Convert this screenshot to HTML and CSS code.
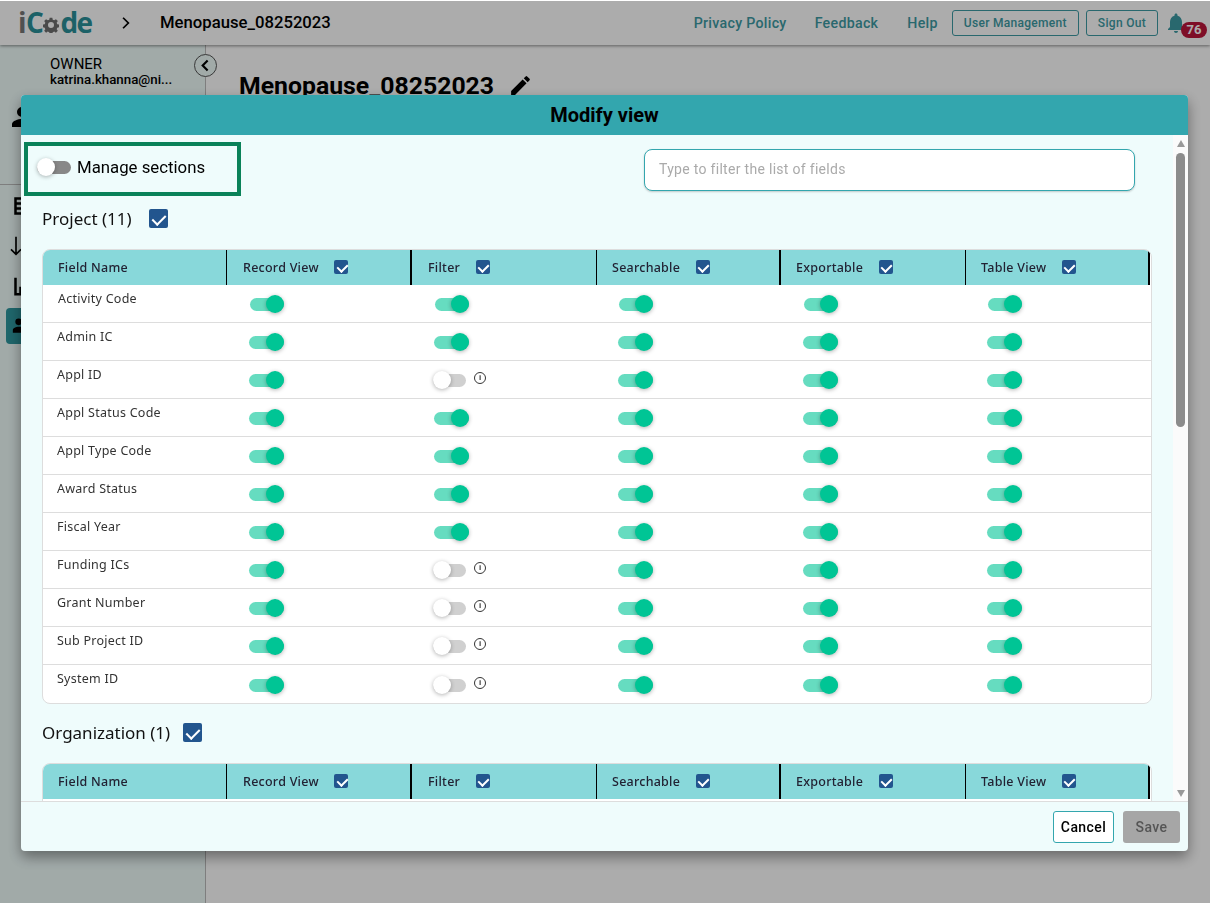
FILE: index.html
```html
<!DOCTYPE html>
<html lang="en">

<head>
    <meta charset="UTF-8">
    <meta name="viewport" content="width=device-width, initial-scale=1.0">
    <title>Modify view</title>
    <link rel="stylesheet" href="styles.css">
</head>

<body>
    <header class="topbar">
        <div class="logo">
            <span class="logo-i">i</span><span>C</span><svg class="logo-gear" viewBox="0 0 24 24"><path fill="#6e6e6e" fill-rule="evenodd" d="M10 1h4l.6 3 2.2.9 2.6-1.700 2.800 2.800-1.700 2.600.9 2.200 3 .6v4l-3 .6-.9 2.200 1.700 2.600-2.800 2.800-2.600-1.700-2.200.9-.6 3h-4l-.6-3-2.200-.9-2.600 1.700-2.800-2.800 1.700-2.600-.9-2.200-3-.6v-4l3-.6.9-2.200-1.700-2.600 2.800-2.800 2.600 1.700 2.200-.9zM12 7.500a4.500 4.500 0 1 0 0 9 4.500 4.500 0 0 0 0-9z"/></svg><span>de</span>
        </div>
        <svg class="crumb-arrow" viewBox="0 0 24 24"><path d="M7 3l9 9-9 9" fill="none" stroke="#000" stroke-width="3"/></svg>
        <div class="crumb">Menopause_08252023</div>
        <nav class="topnav">
            <a href="#">Privacy Policy</a>
            <a href="#">Feedback</a>
            <a href="#">Help</a>
            <button class="outline-btn">User Management</button>
            <button class="outline-btn">Sign Out</button>
        </nav>
        <div class="bell">
            <svg viewBox="0 0 24 24"><path fill="#3d9aa3" d="M12 22c1.100 0 2-.9 2-2h-4c0 1.100.9 2 2 2zm6-6v-5c0-3.070-1.630-5.640-4.500-6.320V4c0-.83-.67-1.500-1.500-1.500s-1.500.67-1.500 1.500v.68C7.640 5.360 6 7.920 6 11v5l-2 2v1h16v-1l-2-2z"/></svg>
            <span class="bell-count">76</span>
        </div>
    </header>

    <div class="page">
        <aside class="sidebar">
            <div class="owner">
                <div class="owner-role">OWNER</div>
                <div class="owner-mail">katrina.khanna@ni...</div>
            </div>
            <button class="collapse-btn"><svg viewBox="0 0 24 24"><path d="M15 5l-7 7 7 7" fill="none" stroke="#000" stroke-width="3"/></svg></button>
            <div class="side-user">
                <svg viewBox="0 0 24 24"><path d="M12 12a5 5 0 1 0 0-10 5 5 0 0 0 0 10zm0 2c-4 0-10 2-10 5v3h20v-3c0-3-6-5-10-5z"/></svg>
            </div>
            <div class="side-nav">
                <div class="side-item"><svg viewBox="0 0 24 24"><path d="M3 3h18v18H3z" fill="none" stroke="#000" stroke-width="3"/><path d="M3 9h18M3 15h18" stroke="#000" stroke-width="3"/></svg></div>
                <div class="side-item side-arrow"><svg viewBox="0 0 24 24"><path d="M12 1v21M6 16l6 6 6-6" fill="none" stroke="#000" stroke-width="2"/></svg></div>
                <div class="side-item"><svg viewBox="0 0 24 24"><path d="M3 2v20h18M9 21v-8M15 21V7" fill="none" stroke="#000" stroke-width="3"/></svg></div>
                <div class="side-item side-active"><svg viewBox="0 0 24 24"><path d="M8 11a4 4 0 1 0 0-8 4 4 0 0 0 0 8zm8 0a4 4 0 1 0 0-8 4 4 0 0 0 0 8zM8 13c-3 0-7 1.500-7 4v3h22v-3c0-2.500-4-4-7-4z"/></svg></div>
            </div>
        </aside>
        <main class="content">
            <h1>Menopause_08252023
                <svg viewBox="0 0 24 24"><path d="M3 17.250V21h3.750L17.810 9.940l-3.750-3.750L3 17.250zM20.710 7.040a1 1 0 0 0 0-1.410l-2.340-2.340a1 1 0 0 0-1.410 0l-1.830 1.830 3.750 3.750 1.830-1.830z"/></svg>
            </h1>
        </main>
    </div>

    <div class="overlay"></div>

    <div class="modal">
        <div class="modal-head">Modify view</div>
        <div class="modal-body">
            <div class="modal-scroll">
                <div class="tools">
                    <div class="manage-box">
                        <span class="toggle dark"></span>
                        <span>Manage sections</span>
                    </div>
                    <input class="filter-input" type="text" placeholder="Type to filter the list of fields">
                </div>

                <div class="group-title">Project (11) <span class="check big"></span></div>
                <div class="field-table">
                    <div class="row head">
                        <div class="cell name thin">Field Name</div>
                        <div class="cell thick">Record View <span class="check"></span></div>
                        <div class="cell thin">Filter <span class="check"></span></div>
                        <div class="cell thick">Searchable <span class="check"></span></div>
                        <div class="cell thin">Exportable <span class="check"></span></div>
                        <div class="cell thick">Table View <span class="check"></span></div>
                    </div>
                    <div class="row first">
                        <div class="cell name">Activity Code</div>
                        <div class="cell"><span class="toggle on"></span></div>
                        <div class="cell"><span class="toggle on"></span></div>
                        <div class="cell"><span class="toggle on"></span></div>
                        <div class="cell"><span class="toggle on"></span></div>
                        <div class="cell"><span class="toggle on"></span></div>
                    </div>
                    <div class="row">
                        <div class="cell name">Admin IC</div>
                        <div class="cell"><span class="toggle on"></span></div>
                        <div class="cell"><span class="toggle on"></span></div>
                        <div class="cell"><span class="toggle on"></span></div>
                        <div class="cell"><span class="toggle on"></span></div>
                        <div class="cell"><span class="toggle on"></span></div>
                    </div>
                    <div class="row">
                        <div class="cell name">Appl ID</div>
                        <div class="cell"><span class="toggle on"></span></div>
                        <div class="cell"><span class="toggle"></span><span class="info">i</span></div>
                        <div class="cell"><span class="toggle on"></span></div>
                        <div class="cell"><span class="toggle on"></span></div>
                        <div class="cell"><span class="toggle on"></span></div>
                    </div>
                    <div class="row">
                        <div class="cell name">Appl Status Code</div>
                        <div class="cell"><span class="toggle on"></span></div>
                        <div class="cell"><span class="toggle on"></span></div>
                        <div class="cell"><span class="toggle on"></span></div>
                        <div class="cell"><span class="toggle on"></span></div>
                        <div class="cell"><span class="toggle on"></span></div>
                    </div>
                    <div class="row">
                        <div class="cell name">Appl Type Code</div>
                        <div class="cell"><span class="toggle on"></span></div>
                        <div class="cell"><span class="toggle on"></span></div>
                        <div class="cell"><span class="toggle on"></span></div>
                        <div class="cell"><span class="toggle on"></span></div>
                        <div class="cell"><span class="toggle on"></span></div>
                    </div>
                    <div class="row">
                        <div class="cell name">Award Status</div>
                        <div class="cell"><span class="toggle on"></span></div>
                        <div class="cell"><span class="toggle on"></span></div>
                        <div class="cell"><span class="toggle on"></span></div>
                        <div class="cell"><span class="toggle on"></span></div>
                        <div class="cell"><span class="toggle on"></span></div>
                    </div>
                    <div class="row">
                        <div class="cell name">Fiscal Year</div>
                        <div class="cell"><span class="toggle on"></span></div>
                        <div class="cell"><span class="toggle on"></span></div>
                        <div class="cell"><span class="toggle on"></span></div>
                        <div class="cell"><span class="toggle on"></span></div>
                        <div class="cell"><span class="toggle on"></span></div>
                    </div>
                    <div class="row">
                        <div class="cell name">Funding ICs</div>
                        <div class="cell"><span class="toggle on"></span></div>
                        <div class="cell"><span class="toggle"></span><span class="info">i</span></div>
                        <div class="cell"><span class="toggle on"></span></div>
                        <div class="cell"><span class="toggle on"></span></div>
                        <div class="cell"><span class="toggle on"></span></div>
                    </div>
                    <div class="row">
                        <div class="cell name">Grant Number</div>
                        <div class="cell"><span class="toggle on"></span></div>
                        <div class="cell"><span class="toggle"></span><span class="info">i</span></div>
                        <div class="cell"><span class="toggle on"></span></div>
                        <div class="cell"><span class="toggle on"></span></div>
                        <div class="cell"><span class="toggle on"></span></div>
                    </div>
                    <div class="row">
                        <div class="cell name">Sub Project ID</div>
                        <div class="cell"><span class="toggle on"></span></div>
                        <div class="cell"><span class="toggle"></span><span class="info">i</span></div>
                        <div class="cell"><span class="toggle on"></span></div>
                        <div class="cell"><span class="toggle on"></span></div>
                        <div class="cell"><span class="toggle on"></span></div>
                    </div>
                    <div class="row last">
                        <div class="cell name">System ID</div>
                        <div class="cell"><span class="toggle on"></span></div>
                        <div class="cell"><span class="toggle"></span><span class="info">i</span></div>
                        <div class="cell"><span class="toggle on"></span></div>
                        <div class="cell"><span class="toggle on"></span></div>
                        <div class="cell"><span class="toggle on"></span></div>
                    </div>
                </div>

                <div class="group-title second">Organization (1) <span class="check big"></span></div>
                <div class="field-table">
                    <div class="row head">
                        <div class="cell name thin">Field Name</div>
                        <div class="cell thick">Record View <span class="check"></span></div>
                        <div class="cell thin">Filter <span class="check"></span></div>
                        <div class="cell thick">Searchable <span class="check"></span></div>
                        <div class="cell thin">Exportable <span class="check"></span></div>
                        <div class="cell thick">Table View <span class="check"></span></div>
                    </div>
                    <div class="row"></div>
                </div>
            </div>
            <div class="scrollbar">
                <span class="arrow-up"></span>
                <div class="scroll-track"><div class="scroll-thumb"></div></div>
                <span class="arrow-down"></span>
            </div>
        </div>
        <div class="modal-foot">
            <button class="cancel-btn">Cancel</button>
            <button class="save-btn">Save</button>
        </div>
    </div>
</body>

</html>
```

FILE: styles.css
```css
* {
    box-sizing: border-box;
}

html,
body {
    height: 100%;
}

body {
    margin: 0;
    overflow: hidden;
    font-family: Roboto, sans-serif;
    background: #ffffff;
}

/* top bar */

.topbar {
    display: flex;
    align-items: center;
    height: 45px;
    padding-left: 18px;
    background: #ffffff;
    box-shadow: 0 1px 3px rgba(0, 0, 0, 0.45);
    position: relative;
    z-index: 2;
}

.logo {
    display: flex;
    align-items: center;
    width: 94px;
    font-family: "Open Sans", sans-serif;
    font-size: 28px;
    font-weight: 700;
    line-height: 45px;
    letter-spacing: -1.5px;
    color: #2a9199;
}

.logo-i {
    margin-right: 1px;
    color: #777;
}

.logo-gear {
    width: 16px;
    height: 16px;
    margin: 5px 1px 0 1px;
}

.crumb-arrow {
    width: 14px;
    height: 14px;
    margin: 0 0 0 7px;
}

.crumb {
    margin-left: 27px;
    font-size: 16.700px;
    font-weight: 500;
    color: #000;
}

.topnav {
    display: flex;
    align-items: center;
    margin-left: auto;
    font-weight: 500;
    letter-spacing: 0.3px;
}

.topnav a {
    margin-right: 29px;
    font-size: 14.200px;
    text-decoration: none;
    color: #3d9aa3;
}

.topnav a:first-child {
    margin-right: 28px;
}

.topnav a:nth-child(3) {
    margin-right: 14px;
}

.outline-btn {
    height: 26px;
    padding: 0 11px;
    margin-right: 7px;
    font: 500 12px Roboto, sans-serif;
    letter-spacing: 0.3px;
    color: #3d9aa3;
    background: #ffffff;
    border: 1px solid #3d9aa3;
    border-radius: 3px;
}

.bell {
    position: relative;
    width: 45px;
    height: 45px;
}

.bell svg {
    position: absolute;
    top: 11px;
    left: -1px;
    width: 24px;
    height: 24px;
}

.bell-count {
    position: absolute;
    top: 22px;
    left: 16px;
    width: 26px;
    height: 16px;
    font-size: 13px;
    font-weight: 700;
    line-height: 16px;
    text-align: center;
    color: #fff;
    background: #bb153b;
    border-radius: 8px;
}

/* page behind the dialog */

.page {
    display: flex;
    height: calc(100% - 45px);
}

.sidebar {
    position: relative;
    width: 206px;
    background: #effcfa;
    border-right: 1px solid #bbb;
}

.owner {
    padding: 11px 0 0 50px;
    color: #000;
}

.owner-role {
    font-size: 15px;
    line-height: 16px;
}

.owner-mail {
    font-size: 13.300px;
    line-height: 16px;
    font-weight: 500;
}

.collapse-btn {
    position: absolute;
    top: 9px;
    right: -12px;
    width: 23px;
    height: 23px;
    padding: 2px;
    background: #effcfa;
    border: 1px solid #555;
    border-radius: 50%;
}

.collapse-btn svg {
    display: block;
}

.side-user {
    height: 97px;
    padding: 17px 0 0 10px;
    border-bottom: 1px solid #bbb;
}

.side-user svg {
    width: 24px;
    height: 24px;
}

.side-nav {
    padding-top: 1px;
}

.side-item {
    display: flex;
    align-items: center;
    height: 40px;
    padding-left: 13px;
}

.side-item svg {
    width: 20px;
    height: 20px;
}

.side-arrow {
    padding-left: 6px;
}

.side-active {
    width: 60px;
    height: 36px;
    margin: 2px 0 0 6px;
    padding-left: 6px;
    background: #2e979f;
    border-radius: 4px;
}

.content {
    flex: 1;
    padding: 26px 0 0 33px;
}

.content h1 {
    display: flex;
    align-items: center;
    gap: 14px;
    margin: 0;
    font-size: 24.800px;
    font-weight: 700;
    color: #000;
}

.content h1 svg {
    width: 25px;
    height: 25px;
}

.overlay {
    position: fixed;
    top: 1px;
    left: 0;
    right: 0;
    bottom: 0;
    z-index: 5;
    background: rgba(0, 0, 0, 0.325);
}

/* dialog */

.modal {
    position: fixed;
    top: 95px;
    left: 21px;
    z-index: 10;
    display: flex;
    flex-direction: column;
    width: 1167px;
    height: 756px;
    overflow: hidden;
    background: #effcfc;
    border-radius: 4px;
    box-shadow: 0 6px 14px rgba(0, 0, 0, 0.4);
}

.modal-head {
    height: 40px;
    font-size: 20px;
    font-weight: 700;
    line-height: 40px;
    text-align: center;
    color: #000;
    background: #33a6ae;
}

.modal-body {
    display: flex;
    flex: 1;
    min-height: 0;
}

.modal-scroll {
    flex: 1;
    overflow: hidden;
}

.tools {
    display: flex;
    height: 61px;
    padding: 7px 0 0 3px;
}

.manage-box {
    display: flex;
    align-items: center;
    gap: 6px;
    width: 217px;
    height: 54px;
    padding: 0 0 4px 9px;
    font-size: 16.800px;
    color: #000;
    border: 4px solid #0a8259;
}

.filter-input {
    width: 491px;
    height: 42px;
    margin: 7px 0 0 403px;
    padding: 0 14px 2px;
    font: 14px Roboto, sans-serif;
    letter-spacing: 0.3px;
    background: #fff;
    border: 1px solid #33a6ae;
    border-radius: 8px;
    box-shadow: 0 1px 2px rgba(0, 0, 0, 0.2);
}

.filter-input::placeholder {
    color: #aaa;
}

.group-title {
    display: flex;
    align-items: center;
    gap: 17px;
    height: 46px;
    margin-bottom: 7px;
    padding: 0 0 2px 21px;
    font-family: "Noto Sans", sans-serif;
    font-size: 17px;
    color: #111;
}

.group-title.second {
    gap: 13px;
    height: 59px;
    margin-bottom: 0;
}

/* field tables */

.field-table {
    width: 1110px;
    margin-left: 21px;
    overflow: hidden;
    background: #fff;
    border: 1px solid #ddd;
    border-radius: 8px;
    font-family: "Noto Sans", sans-serif;
    font-size: 12.500px;
    letter-spacing: 0.25px;
    color: #333;
}

.row {
    display: grid;
    grid-template-columns: 184px 185px 185px 184px 185px 184px;
    height: 38px;
    border-bottom: 1px solid #ddd;
}

.row.last {
    border-bottom: 0;
}

.row.head {
    width: 1107px;
    height: 35px;
    background: #88d8da;
    border-bottom: 0;
    font-weight: 500;
    color: #223;
}

.cell {
    display: flex;
    align-items: center;
    padding: 2px 0 0 22px;
}

.cell:nth-child(4),
.cell:nth-child(6) {
    padding-left: 21px;
}

.cell.name {
    align-items: flex-start;
    padding: 5px 0 0 14px;
}

.first .cell.name {
    padding-left: 15px;
}

.head .cell {
    gap: 15.500px;
    padding: 0 0 0 16px;
}

.head .cell:nth-child(n+4) {
    padding-left: 15px;
}

.head .cell.name {
    align-items: center;
    padding: 0 0 0 15px;
}

.thin {
    border-right: 1px solid #000;
}

.thick {
    border-right: 2px solid #000;
}

.check {
    position: relative;
    display: inline-block;
    flex: none;
    width: 14px;
    height: 14px;
    margin-top: -2px;
    background: #22558e;
    border-radius: 2px;
}

.check::after {
    content: "";
    position: absolute;
    top: 2px;
    left: 4.500px;
    width: 5px;
    height: 8px;
    border: solid #fff;
    border-width: 0 2px 2px 0;
    transform: rotate(45deg);
}

.check.big {
    width: 19px;
    height: 19px;
    margin: 0;
}

.check.big::after {
    top: 3px;
    left: 6px;
    width: 6px;
    height: 11px;
}

/* switches */

.toggle {
    position: relative;
    display: inline-block;
    flex: none;
    width: 33px;
    height: 13px;
    margin-left: -1px;
    background: #d0d0d0;
    border-radius: 7px;
}

.toggle::after {
    content: "";
    position: absolute;
    top: -3px;
    left: 0;
    width: 18px;
    height: 18px;
    background: #fff;
    border-radius: 50%;
    box-shadow: 0 1px 4px rgba(0, 0, 0, 0.3);
}

.toggle.on {
    width: 35px;
    margin-left: 0;
    background: #66dcc0;
}

.toggle.on::after {
    left: auto;
    right: 0;
    background: #00c595;
}

.first .toggle.on {
    width: 34px;
    margin-left: 1px;
}

.toggle.dark {
    width: 34px;
    margin-left: 0;
    background: #888;
}

.info {
    width: 12px;
    height: 12px;
    margin: -5px 0 0 8px;
    font-family: "Liberation Sans", sans-serif;
    font-size: 8px;
    font-weight: 700;
    line-height: 10px;
    text-align: center;
    letter-spacing: 0;
    color: #333;
    border: 1px solid #333;
    border-radius: 50%;
}

/* drawn scrollbar of the dialog */

.scrollbar {
    display: flex;
    flex-direction: column;
    align-items: center;
    flex: none;
    width: 15px;
    padding: 5px 0 4px;
    background: #fbfbfb;
}

.arrow-up,
.arrow-down {
    width: 0;
    height: 0;
    border-left: 4.500px solid transparent;
    border-right: 4.500px solid transparent;
}

.arrow-up {
    border-bottom: 7px solid #999;
}

.arrow-down {
    border-top: 7px solid #999;
}

.scroll-track {
    flex: 1;
    width: 9px;
    padding-top: 6px;
}

.scroll-thumb {
    height: 274px;
    background: #8c8c8c;
    border-radius: 5px;
}

/* footer */

.modal-foot {
    display: flex;
    justify-content: flex-end;
    align-items: flex-start;
    gap: 9px;
    height: 50px;
    padding: 9px 8px 0 0;
    border-top: 1px solid #ddd;
}

.cancel-btn,
.save-btn {
    height: 32px;
    font: 500 14px Roboto, sans-serif;
    letter-spacing: 0.4px;
    border-radius: 3px;
}

.cancel-btn {
    width: 61px;
    color: #000;
    background: #fff;
    border: 1px solid #33a6ae;
}

.save-btn {
    width: 57px;
    color: #555;
    background: #a6a6a6;
    border: 0;
}
```
